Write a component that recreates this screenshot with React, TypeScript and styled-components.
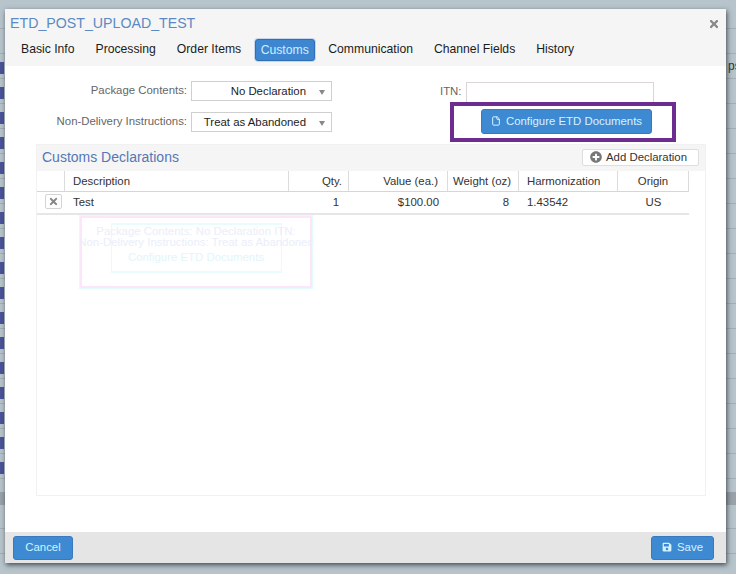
import React from 'react';
import styled, { createGlobalStyle } from 'styled-components';
import { FaTimes, FaPlusCircle, FaSave } from 'react-icons/fa';
import { File } from 'lucide-react';

const tabs = ['Basic Info', 'Processing', 'Order Items', 'Customs', 'Communication', 'Channel Fields', 'History'];

const columns = [
  { label: '', width: 28, align: 'left', pad: 6 },
  { label: 'Description', width: 224, align: 'left', pad: 6 },
  { label: 'Qty.', width: 60, align: 'right', pad: 6 },
  { label: 'Value (ea.)', width: 99, align: 'right', pad: 9 },
  { label: 'Weight (oz)', width: 71, align: 'right', pad: 7 },
  { label: 'Harmonization', width: 99, align: 'left', pad: 6 },
  { label: 'Origin', width: 71, align: 'center', pad: 8 },
];

const App = () => {
  return (
    <Page>
      <GlobalStyle />
      <BehindText>ps</BehindText>
      <Modal>
        <Header>
          <TitleRow>
            <Title>ETD_POST_UPLOAD_TEST</Title>
            <CloseIcon>
              <FaTimes size={12} />
            </CloseIcon>
          </TitleRow>
          <TabRow>
            {tabs.map((tab) => (
              <Tab key={tab} active={tab === 'Customs'}>
                {tab}
              </Tab>
            ))}
          </TabRow>
        </Header>

        <Body>
          <FormRow>
            <FormColumn>
              <Field>
                <FieldLabel>Package Contents:</FieldLabel>
                <Select>
                  No Declaration
                  <Caret />
                </Select>
              </Field>
              <Field>
                <FieldLabel>Non-Delivery Instructions:</FieldLabel>
                <Select>
                  Treat as Abandoned
                  <Caret />
                </Select>
              </Field>
            </FormColumn>
            <EtdColumn>
              <ItnField>
                <FieldLabel>ITN:</FieldLabel>
                <ItnInput />
              </ItnField>
              <Highlight>
                <PrimaryButton width={171} height={25}>
                  <File size={10} strokeWidth={2.4} />
                  Configure ETD Documents
                </PrimaryButton>
              </Highlight>
            </EtdColumn>
          </FormRow>

          <Panel>
            <PanelHeader>
              <PanelTitle>Customs Declarations</PanelTitle>
              <AddButton>
                <FaPlusCircle size={12} color="#777" />
                Add Declaration
              </AddButton>
            </PanelHeader>
            <Table>
              <TableHead>
                {columns.map((col) => (
                  <HeadCell key={col.label} width={col.width} align={col.align} pad={col.pad}>
                    {col.label}
                  </HeadCell>
                ))}
              </TableHead>
              <TableRow>
                <Cell width={28} align="left" pad={0}>
                  <DeleteButton>
                    <FaTimes size={11} color="#888" />
                  </DeleteButton>
                </Cell>
                <Cell width={224} align="left" pad={6}>Test</Cell>
                <Cell width={60} align="right" pad={10}>1</Cell>
                <Cell width={99} align="right" pad={9}>$100.00</Cell>
                <Cell width={71} align="right" pad={10}>8</Cell>
                <Cell width={99} align="left" pad={6}>1.43542</Cell>
                <Cell width={71} align="center" pad={8}>US</Cell>
              </TableRow>
            </Table>
            {/* faint after-image of the form that shows in the screenshot */}
            <GhostFrame>
              <GhostInner>
                <GhostLine>Package Contents: No Declaration ITN:</GhostLine>
                <GhostLine>Non-Delivery Instructions: Treat as Abandoned</GhostLine>
                <GhostButton>Configure ETD Documents</GhostButton>
              </GhostInner>
            </GhostFrame>
          </Panel>
        </Body>

        <Footer>
          <PrimaryButton width={60} height={24}>Cancel</PrimaryButton>
          <PrimaryButton width={63} height={24}>
            <FaSave size={10} />
            Save
          </PrimaryButton>
        </Footer>
      </Modal>
    </Page>
  );
};

export default App;

const GlobalStyle = createGlobalStyle`
  html, body {
    margin: 0;
    padding: 0;
    font-family: "Liberation Sans", Arial, sans-serif;
  }
`;

const Page = styled.div`
  position: relative;
  width: 736px;
  height: 574px;
  overflow: hidden;
  background-color: #b8c4cb;
  background-image:
    linear-gradient(#98a2a8, #98a2a8),
    repeating-linear-gradient(
      to bottom,
      #4a5299 0,
      #4a5299 12px,
      transparent 12px,
      transparent 25px
    ),
    repeating-linear-gradient(
      to bottom,
      transparent 0,
      transparent 24px,
      #a3afb6 24px,
      #a3afb6 25px
    );
  background-size: 100% 13px, 4px 418px, 100% 100%;
  background-position: 0 492px, 0 62px, 0 4px;
  background-repeat: no-repeat, no-repeat, repeat;
`;

const BehindText = styled.span`
  position: absolute;
  left: 728px;
  top: 59px;
  font-size: 12px;
  color: #333;
`;

const Modal = styled.div`
  position: absolute;
  left: 5px;
  top: 9px;
  width: 721px;
  height: 554px;
  display: flex;
  flex-direction: column;
  background: #fff;
  box-shadow: 1px 2px 5px rgba(35, 45, 50, 0.8);
`;

const Header = styled.div`
  height: 57px;
  padding: 0 5px;
  box-sizing: border-box;
  background: #f5f5f5;
  flex-shrink: 0;
`;

const TitleRow = styled.div`
  display: flex;
  align-items: center;
  justify-content: space-between;
  height: 27px;
  padding-right: 1px;
`;

const Title = styled.div`
  font-size: 14.2px;
  color: #5b8ac4;
`;

const CloseIcon = styled.span`
  display: flex;
  margin-top: 3px;
  color: #888;
`;

const TabRow = styled.div`
  display: flex;
  align-items: center;
  gap: 9px;
  height: 22px;
  margin-top: 3px;
  padding-left: 5px;
`;

const Tab = styled.div<{ active?: boolean }>`
  padding: 0 ${({ active }) => (active ? '5px' : '6px')};
  margin: 0 ${({ active }) => (active ? '-1.5px' : '0')};
  height: 22px;
  line-height: 20px;
  box-sizing: border-box;
  font-size: 12.2px;
  white-space: nowrap;
  color: ${({ active }) => (active ? '#cfeefc' : '#1c1c1c')};
  ${({ active }) =>
    active &&
    `
    background: #3f86d0;
    border: 1px solid #2f6fb5;
    border-radius: 3px;
    box-shadow: 0 0 0 1px #c9d6ea;
  `}
`;

const Body = styled.div`
  flex: 1;
  padding: 14px 21px 0 31px;
  min-height: 0;
  display: flex;
  flex-direction: column;
`;

const FormRow = styled.div`
  display: flex;
  height: 64px;
`;

const FormColumn = styled.div`
  width: 296px;
  display: flex;
  flex-direction: column;
  gap: 11px;
  margin-top: 1px;
`;

const Field = styled.div`
  display: flex;
  align-items: center;
  justify-content: flex-end;
  gap: 4px;
`;

const FieldLabel = styled.span`
  padding-bottom: 2px;
  font-size: 11.4px;
  color: #666;
  white-space: nowrap;
`;

const Select = styled.div`
  position: relative;
  width: 141px;
  height: 20px;
  box-sizing: border-box;
  border: 1px solid #cfcfcf;
  padding-right: 25px;
  text-align: right;
  font-size: 11.4px;
  line-height: 18px;
  color: #1c1c1c;
  background: #fff;
`;

const Caret = styled.span`
  position: absolute;
  right: 6px;
  top: 8px;
  border: 3.5px solid transparent;
  border-top: 5px solid #888;
  border-bottom: none;
`;

const EtdColumn = styled.div`
  width: 226px;
  margin-left: 118px;
  display: flex;
  flex-direction: column;
`;

const ItnField = styled.div`
  display: flex;
  align-items: center;
  gap: 4px;
  margin: 2px 0 0 -10px;
  height: 20px;
`;

const ItnInput = styled.div`
  width: 188px;
  height: 20px;
  box-sizing: border-box;
  border: 1px solid #d8d4d8;
  border-bottom: none;
  background: #fff;
`;

const Highlight = styled.div`
  width: 226px;
  height: 40px;
  box-sizing: border-box;
  border: 4px solid #6d2c90;
  padding: 3px 0 0 27px;
`;

const PrimaryButton = styled.div<{ width: number; height: number }>`
  display: flex;
  align-items: center;
  justify-content: center;
  gap: 5px;
  height: ${({ height }) => height}px;
  width: ${({ width }) => width}px;
  padding-bottom: 1px;
  box-sizing: border-box;
  border-radius: 3px;
  background: #3e8ad2;
  border: 1px solid #3a78c0;
  font-size: 11.4px;
  color: #d5f2ff;
  white-space: nowrap;
`;

const Panel = styled.div`
  position: relative;
  width: 670px;
  height: 352px;
  box-sizing: border-box;
  border: 1px solid #f1f1f1;
  flex-shrink: 0;
`;

const PanelHeader = styled.div`
  height: 26px;
  box-sizing: border-box;
  display: flex;
  align-items: center;
  justify-content: space-between;
  padding: 0 6px 2px 5px;
  background: #f5f5f5;
`;

const PanelTitle = styled.div`
  font-size: 14px;
  color: #5577b5;
`;

const AddButton = styled.div`
  display: flex;
  align-items: center;
  justify-content: center;
  gap: 4px;
  width: 117px;
  height: 17px;
  padding-right: 4px;
  box-sizing: border-box;
  background: #fff;
  border: 1px solid #dedede;
  border-radius: 2px;
  font-size: 11.4px;
  color: #333;
`;

const Table = styled.div`
  width: 652px;
  display: flex;
  flex-direction: column;
`;

const TableHead = styled.div`
  display: flex;
  height: 21px;
  border-bottom: 1px solid #d6d6d6;
  box-sizing: border-box;
`;

const TableRow = styled.div`
  display: flex;
  height: 23px;
  border-bottom: 2px solid #e6e6e6;
  box-sizing: border-box;
`;

const HeadCell = styled.div<{ width: number; align: string; pad: number }>`
  width: ${({ width }) => width}px;
  box-sizing: border-box;
  padding: 0 ${({ pad }) => pad}px 0 ${({ align }) => (align === 'right' ? 0 : 8)}px;
  border-right: 1px solid #dcdcdc;
  font-size: 11.4px;
  line-height: 20px;
  color: #333;
  text-align: ${({ align }) => align};
  white-space: nowrap;
`;

const Cell = styled.div<{ width: number; align: string; pad: number }>`
  width: ${({ width }) => width}px;
  box-sizing: border-box;
  padding: 0 ${({ pad }) => pad}px 0 ${({ align }) => (align === 'right' ? 0 : 8)}px;
  font-size: 11.4px;
  line-height: 20px;
  color: #333;
  text-align: ${({ align }) => align};
`;

const DeleteButton = styled.div`
  width: 17px;
  height: 15px;
  margin: 2px 0 0 0;
  box-sizing: border-box;
  border: 1px solid #d4d4d4;
  border-radius: 2px;
  display: flex;
  align-items: center;
  justify-content: center;
`;

const GhostFrame = styled.div`
  position: absolute;
  left: 43px;
  top: 71px;
  width: 232px;
  height: 72px;
  padding-top: 5px;
  box-sizing: border-box;
  border: 2px solid #fde6fa;
  outline: 1px solid #e3fbfd;
  display: flex;
  justify-content: center;
`;

const GhostInner = styled.div`
  width: 171px;
  height: 50px;
  padding-top: 1px;
  box-sizing: border-box;
  border: 1px solid #fdeffc;
  border-top: 2px solid #e9fcfd;
  border-bottom: 2px solid #e9fcfd;
  display: flex;
  flex-direction: column;
  align-items: center;
`;

const GhostLine = styled.div`
  font-size: 11.4px;
  line-height: 11px;
  height: 11px;
  color: #eaeefa;
  white-space: nowrap;
`;

const GhostButton = styled.div`
  margin-top: 3px;
  font-size: 11.4px;
  line-height: 12px;
  color: #e3f5fb;
  white-space: nowrap;
`;

const Footer = styled.div`
  height: 31px;
  flex-shrink: 0;
  background: #e5e5e5;
  display: flex;
  align-items: center;
  justify-content: space-between;
  padding: 0 12px 0 8px;
`;
